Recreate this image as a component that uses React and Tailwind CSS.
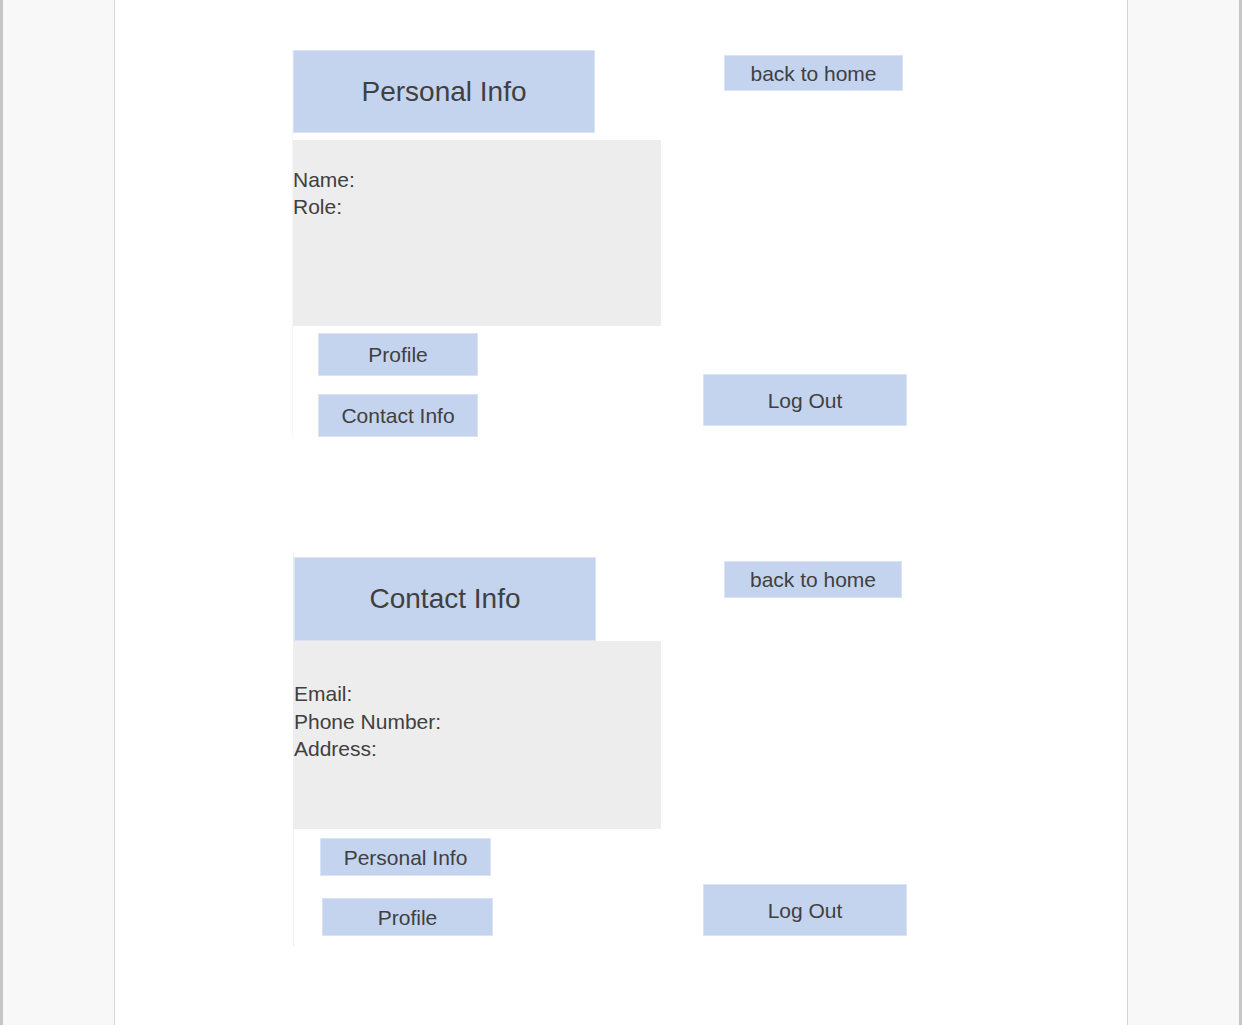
import React from "react";

const font = { fontFamily: '"Liberation Sans", Arial, sans-serif' };

function Btn({ className, children }) {
  return (
    <div
      className={
        "flex items-center justify-center bg-[#c5d4ee] border border-[#dbe4f4] text-[#404040] text-[21px] leading-none " +
        className
      }
    >
      {children}
    </div>
  );
}

export default function App() {
  return (
    <div className="w-[1242px] h-[1025px] flex bg-[#f8f8f8] overflow-hidden" style={font}>
      <div className="w-[3px] h-full bg-[#c6c6c6]" />
      <div className="w-[111px] h-full" />
      <div className="w-[1014px] h-full bg-white border-l border-r border-[#d4d4d4] flex flex-col">
        {/* Section 1 */}
        <div className="mt-[50px] ml-[177px] flex">
          <div className="w-[369px] flex flex-col border-l border-[#f6f6f6] pb-[1px]">
            <div className="w-[302px] h-[83px] bg-[#c5d4ee] border border-[#dbe4f4] flex items-center justify-center text-[28px] text-[#404040]">
              Personal Info
            </div>
            <div className="mt-[7px] h-[186px] bg-[#ededed] pt-[26px] text-[21px] leading-[27px] text-[#404040]">
              <div>Name:</div>
              <div>Role:</div>
            </div>
            <Btn className="mt-[7px] ml-[25px] w-[160px] h-[43px]">Profile</Btn>
            <Btn className="mt-[18px] ml-[25px] w-[160px] h-[43px]">Contact Info</Btn>
          </div>
          <div className="ml-[42px] flex flex-col">
            <Btn className="mt-[5px] ml-[21px] w-[179px] h-[36px]">back to home</Btn>
            <Btn className="mt-[283px] w-[204px] h-[52px]">Log Out</Btn>
          </div>
        </div>

        {/* Section 2 */}
        <div className="mt-[115px] ml-[178px] flex">
          <div className="w-[368px] flex flex-col border-l border-[#eeeeee] pt-[4px] pb-[10px]">
            <div className="w-[302px] h-[84px] bg-[#c5d4ee] border border-[#dbe4f4] flex items-center justify-center text-[28px] text-[#404040]">
              Contact Info
            </div>
            <div className="h-[188px] bg-[#ededed] pt-[39px] text-[21px] leading-[27.5px] text-[#404040]">
              <div>Email:</div>
              <div>Phone Number:</div>
              <div>Address:</div>
            </div>
            <Btn className="mt-[9px] ml-[26px] w-[171px] h-[38px]">Personal Info</Btn>
            <Btn className="mt-[22px] ml-[28px] w-[171px] h-[38px]">Profile</Btn>
          </div>
          <div className="ml-[42px] flex flex-col">
            <Btn className="mt-[8px] ml-[21px] w-[178px] h-[37px]">back to home</Btn>
            <Btn className="mt-[286px] w-[204px] h-[52px]">Log Out</Btn>
          </div>
        </div>
      </div>
      <div className="w-[111px] h-full" />
      <div className="w-[3px] h-full bg-[#c6c6c6]" />
    </div>
  );
}
